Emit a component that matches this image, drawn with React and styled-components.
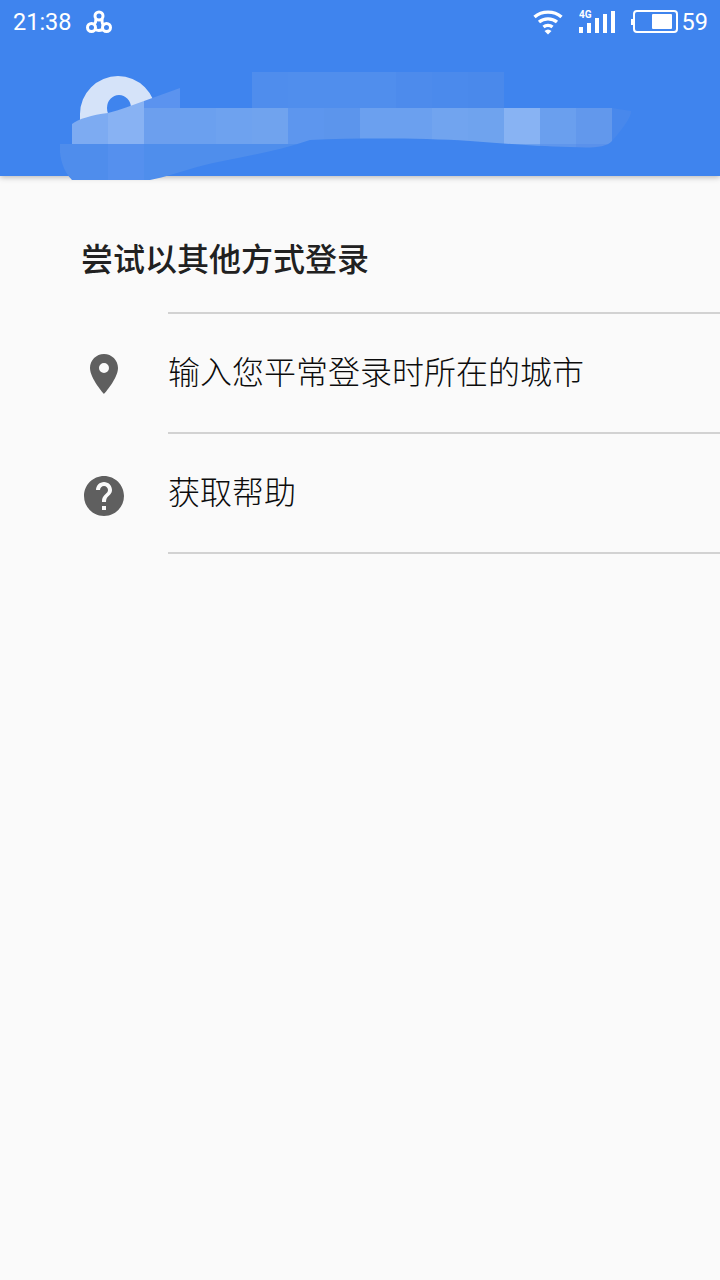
import React from "react";
import styled, { createGlobalStyle } from "styled-components";

const GlobalStyle = createGlobalStyle`
	html, body {
		margin: 0;
		padding: 0;
		background: #fafafa;
	}
	#root {
		min-height: 1280px;
	}
`;

const Page = styled.div`
	width: 720px;
	height: 1280px;
	background: #fafafa;
	overflow: hidden;
	font-family: "Noto Sans CJK SC", "Noto Sans", sans-serif;
`;

const Header = styled.header`
	position: relative;
	height: 176px;
	background: #3f84ee;
	box-shadow: 0 1px 6px rgba(0, 0, 0, 0.3);
`;

const StatusBar = styled.div`
	display: flex;
	align-items: center;
	justify-content: space-between;
	height: 44px;
	padding: 0 12px 0 13px;
	color: #fff;
	font-family: Roboto, sans-serif;
	font-size: 23.5px;
	line-height: 44px;
`;

const StatusGroup = styled.div`
	display: flex;
	align-items: center;
	gap: ${(p) => p.$gap}px;
`;

const Redaction = styled.svg`
	position: absolute;
	left: 0;
	top: 0;
	z-index: 2;
`;

const Title = styled.h1`
	margin: 0;
	padding: 57px 0 31px 81px;
	font-size: 32px;
	line-height: 48px;
	font-weight: 500;
	color: #212121;
`;

const List = styled.ul`
	margin: 0;
	padding: 0;
	list-style: none;
`;

const Row = styled.li`
	display: flex;
	align-items: stretch;
	height: 120px;
`;

const IconCell = styled.div`
	display: flex;
	align-items: center;
	width: 168px;
	padding: ${(p) => p.$top}px 0 0 80px;
	box-sizing: border-box;
	fill: #5f5f5f;
`;

const RowLabel = styled.div`
	flex: 1;
	display: flex;
	align-items: center;
	padding-bottom: 6px;
	border-top: 2px solid #d2d2d2;
	font-size: 32px;
	font-weight: 300;
	color: #0c0c0c;
`;

const LastLine = styled.div`
	margin-left: 168px;
	border-top: 2px solid #d2d2d2;
`;

const top = [
	[252, "#4f8ded"], [288, "#508eed"], [324, "#508eed"], [360, "#508eed"],
	[396, "#4d8bec"], [432, "#4b8aec"], [468, "#4a89eb"],
];

const middle = [
	[72, "#7dabf2"], [108, "#88b2f3"], [144, "#6c9fee"], [180, "#6ba0ef"], [216, "#6ea2ef"],
	[252, "#70a3ee"], [288, "#5d96ee"], [324, "#5c95ec"], [360, "#6ba0ef"], [396, "#6ba0ef"],
	[432, "#71a4ef"], [468, "#6fa3ee"], [504, "#88b3f3"], [540, "#6a9fee"], [576, "#6298ec"],
	[612, "#4888ec"],
];

const bottom = [
	[60, "#4f8dec"], [108, "#5590ee"], [144, "#4f8eec"], [180, "#4f8eec"], [216, "#4f8eec"],
	[252, "#4f8eec"], [288, "#4f8eec"], [324, "#4f8eec"], [360, "#4f8eec"], [396, "#4f8eec"],
	[432, "#5f97ee"], [468, "#5f97ee"], [504, "#6a9fee"], [540, "#5f96ec"], [576, "#5a91eb"],
];

const Mosaic = () => (
	<Redaction width="720" height="190" viewBox="0 0 720 190">
		<path
			fill="#d5e3f9"
			fillRule="evenodd"
			d="M80 128V114a38 38 0 0 1 76 0V128ZM107 108a12 13 0 0 0 24 0a12 13 0 0 0-24 0Z"
		/>
		<defs>
			<clipPath id="smear">
				<path d="M72 124C78 119 92 115 108 113C120 110 132 105 144 101L180 88V108H612L631 111Q632 118 612 141C606 148 590 148 570 147C530 146 500 143 470 141C420 138 360 138 310 140C270 154 230 158 197 167C180 172 165 177 150 180H72C62 170 59 155 60 144H72Z" />
			</clipPath>
		</defs>
		<g clipPath="url(#smear)">
			{middle.map(([x, fill]) => (
				<rect key={x} x={x} y="108" width={x === 612 ? 20 : 36} height="36" fill={fill} />
			))}
			{bottom.map(([x, fill]) => (
				<rect key={x} x={x} y="144" width={x === 60 ? 48 : 36} height="36" fill={fill} />
			))}
			<rect x="72" y="72" width="36" height="36" fill="#7dabf2" />
			<rect x="108" y="72" width="36" height="36" fill="#88b2f3" />
			<rect x="144" y="72" width="36" height="36" fill="#5b93ef" />
		</g>
		{top.map(([x, fill]) => (
			<rect key={x} x={x} y="72" width="36" height="36" fill={fill} />
		))}
	</Redaction>
);

const LoopIcon = () => (
	<svg width="28" height="24" viewBox="0 0 28 24" fill="none" stroke="#fff" strokeWidth="3">
		<circle cx="14" cy="6" r="4" />
		<circle cx="6.5" cy="17.5" r="4" />
		<circle cx="21.5" cy="17.5" r="4" />
		<path d="M9 14.5C10.5 13 11 11 11 9" />
		<path d="M17 9C17 12 17.5 14.5 18.5 15" />
		<path d="M10 19.5C13 21 15.5 20.5 18 19.5" />
	</svg>
);

const WifiIcon = () => (
	<svg width="30" height="26" viewBox="0 0 30 26" fill="none" stroke="#fff" strokeWidth="3.4">
		<path d="M1.5 8C9 1.5 21 1.5 28.5 8" />
		<path d="M6 13C11 8.8 19 8.8 24 13" />
		<path d="M10.5 18C13 16 17 16 19.5 18" />
		<path d="M11.5 22L15 25.5L18.5 22Q15 19 11.5 22Z" fill="#fff" stroke="none" />
	</svg>
);

const SignalIcon = () => (
	<svg width="36" height="24" viewBox="0 0 36 24" fill="#fff">
		<text x="0" y="8" fontFamily="Roboto, sans-serif" fontWeight="700" fontSize="10">
			4G
		</text>
		<rect x="0" y="17" width="4" height="6" />
		<rect x="8" y="13" width="4" height="10" />
		<rect x="16" y="8" width="4" height="15" />
		<rect x="24" y="4" width="4" height="19" />
		<rect x="32" y="1" width="4" height="22" />
	</svg>
);

const BatteryIcon = () => (
	<svg width="48" height="24" viewBox="0 0 48 24">
		<rect x="3" y="1" width="43" height="21" rx="3" fill="none" stroke="#fff" strokeWidth="2" />
		<rect x="0" y="9" width="2" height="6" fill="#fff" />
		<rect x="21" y="4" width="20" height="15" rx="1" fill="#fff" />
	</svg>
);

const PinIcon = () => (
	<svg width="48" height="48" viewBox="0 0 24 24">
		<path d="M12 2C8.13 2 5 5.13 5 9c0 5.25 7 13 7 13s7-7.75 7-13c0-3.87-3.13-7-7-7zm0 9.5a2.5 2.5 0 0 1 0-5 2.5 2.5 0 0 1 0 5z" />
	</svg>
);

const HelpIcon = () => (
	<svg width="48" height="48" viewBox="0 0 24 24">
		<path d="M12 2C6.48 2 2 6.48 2 12s4.48 10 10 10 10-4.48 10-10S17.52 2 12 2zm1 17h-2v-2h2v2zm2.07-7.75l-.9.92C13.45 12.9 13 13.5 13 15h-2v-.5c0-1.1.45-2.1 1.17-2.83l1.24-1.26c.37-.36.59-.86.59-1.41 0-1.1-.9-2-2-2s-2 .9-2 2H8c0-2.21 1.79-4 4-4s4 1.79 4 4c0 .88-.36 1.68-.93 2.25z" />
	</svg>
);

export default function App() {
	return (
		<Page>
			<GlobalStyle />
			<Header>
				<StatusBar>
					<StatusGroup $gap={13}>
						<span>21:38</span>
						<LoopIcon />
					</StatusGroup>
					<StatusGroup $gap={3}>
						<StatusGroup $gap={16}>
							<WifiIcon />
							<SignalIcon />
							<BatteryIcon />
						</StatusGroup>
						<span>59</span>
					</StatusGroup>
				</StatusBar>
				<Mosaic />
			</Header>
			<Title>尝试以其他方式登录</Title>
			<List>
				<Row>
					<IconCell $top={3}>
						<PinIcon />
					</IconCell>
					<RowLabel>输入您平常登录时所在的城市</RowLabel>
				</Row>
				<Row>
					<IconCell $top={7}>
						<HelpIcon />
					</IconCell>
					<RowLabel>获取帮助</RowLabel>
				</Row>
			</List>
			<LastLine />
		</Page>
	);
}
